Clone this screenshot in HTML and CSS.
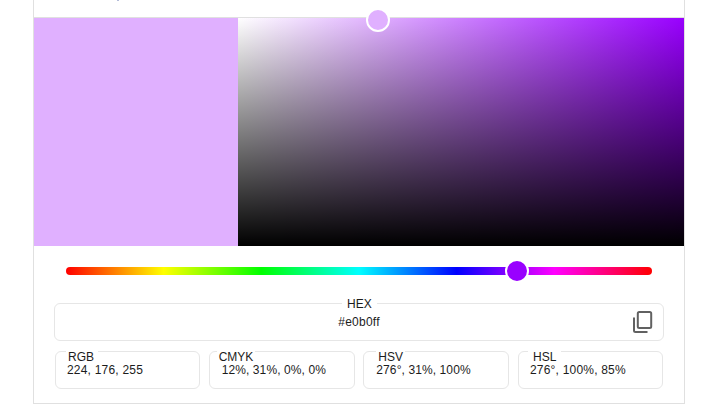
FILE: index.html
```html
<!DOCTYPE html>
<html lang="en">
<head>
<meta charset="utf-8">
<title>Color picker</title>
<link rel="stylesheet" href="styles.css">
</head>
<body>
<main class="card">
  <div class="card-top"><span class="clip-mark"></span></div>
  <section class="picker">
    <div class="swatch"></div>
    <div class="saturation"></div>
    <span class="sat-thumb"></span>
  </section>
  <div class="hue">
    <span class="hue-thumb"></span>
  </div>
  <div class="field field-hex">
    <span class="field-label hex-label">HEX</span>
    <span class="hex-value">#e0b0ff</span>
    <svg class="copy-icon" width="22" height="24" viewBox="0 0 22 24" aria-hidden="true">
      <path d="M1 6.500V19.500Q1 21 2.500 21H14.500" fill="none" stroke="#616161" stroke-width="2"/>
      <rect x="4.800" y="1" width="13.400" height="16" rx="1.500" fill="none" stroke="#616161" stroke-width="2"/>
    </svg>
  </div>
  <div class="values">
    <div class="field field-small">
      <span class="field-label rgb-label">RGB</span>
      <span class="value rgb-value">224, 176, 255</span>
    </div>
    <div class="field field-small">
      <span class="field-label cmyk-label">CMYK</span>
      <span class="value cmyk-value">12%, 31%, 0%, 0%</span>
    </div>
    <div class="field field-small">
      <span class="field-label hsv-label">HSV</span>
      <span class="value hsv-value">276°, 31%, 100%</span>
    </div>
    <div class="field field-small">
      <span class="field-label hsl-label">HSL</span>
      <span class="value hsl-value">276°, 100%, 85%</span>
    </div>
  </div>
</main>
</body>
</html>
```
FILE: styles.css
```css
* { box-sizing: border-box; }
html, body { margin: 0; padding: 0; background: #fff; overflow: hidden; }
body {
  font-family: "Liberation Sans", Arial, sans-serif;
  font-size: 12px;
  color: #1c1c1c;
}
.card {
  position: relative;
  width: 652px;
  height: 404px;
  margin-left: 33px;
  border: 1px solid #e0e0e0;
  border-width: 0 1px 1px;
}
.card-top { height: 17px; position: relative; }
.clip-mark {
  position: absolute;
  left: 83px;
  top: 0;
  width: 2px;
  height: 1px;
  background: #b4bcd8;
}
.picker {
  position: relative;
  display: flex;
  height: 229px;
  border-top: 1px solid #e0e0e0;
}
.swatch { width: 204px; background: #e0b0ff; }
.saturation {
  flex: 1;
  background:
    linear-gradient(to bottom, rgba(0,0,0,0), #000),
    linear-gradient(to right, #fff, #9900ff);
}
.sat-thumb {
  position: absolute;
  left: 332px;
  top: -10px;
  width: 24px;
  height: 24px;
  border-radius: 50%;
  background: #e0b0ff;
  border: 2px solid #fff;
}
.hue {
  position: relative;
  height: 8px;
  margin: 21px 32px 28px;
  border-radius: 4px;
  background: linear-gradient(to right, #f00 0%, #ff0 16.67%, #0f0 33.33%, #0ff 50%, #00f 66.67%, #f0f 83.33%, #f00 100%);
}
.hue-thumb {
  position: absolute;
  left: 439px;
  top: -8px;
  width: 24px;
  height: 24px;
  border-radius: 50%;
  background: #9900ff;
  border: 2px solid #fff;
}
.field {
  position: relative;
  height: 38px;
  border: 1px solid #e6e6e6;
  border-radius: 6px;
  background: #fff;
}
.field-hex {
  display: flex;
  align-items: center;
  justify-content: center;
  margin: 0 20px 10px;
}
.field-label {
  position: absolute;
  background: #fff;
  line-height: 14px;
  white-space: nowrap;
}
.hex-label { top: -7px; left: 287px; padding: 0 5px; }
.hex-value { line-height: 14px; letter-spacing: 0.25px; }
.copy-icon { position: absolute; right: 8px; top: 7px; }
.values {
  display: grid;
  grid-template-columns: 145px 146px 146px 145px;
  justify-content: space-between;
  margin: 0 21px;
}
.field-small { display: block; }
.value {
  position: absolute;
  top: 11px;
  line-height: 14px;
  white-space: nowrap;
  letter-spacing: 0.1px;
}
.rgb-label { top: -2px; left: 10px; padding: 0 4px 0 2px; }
.cmyk-label { top: -2px; left: 7px; padding: 0 2px; }
.hsv-label { top: -2px; left: 12px; padding: 0 2px; }
.hsl-label { top: -2px; left: 9px; padding: 0 5px; }
.rgb-value { left: 11px; letter-spacing: 0.2px; }
.cmyk-value { left: 12px; }
.hsv-value { left: 12px; }
.hsl-value { left: 11px; letter-spacing: 0.2px; }
```
